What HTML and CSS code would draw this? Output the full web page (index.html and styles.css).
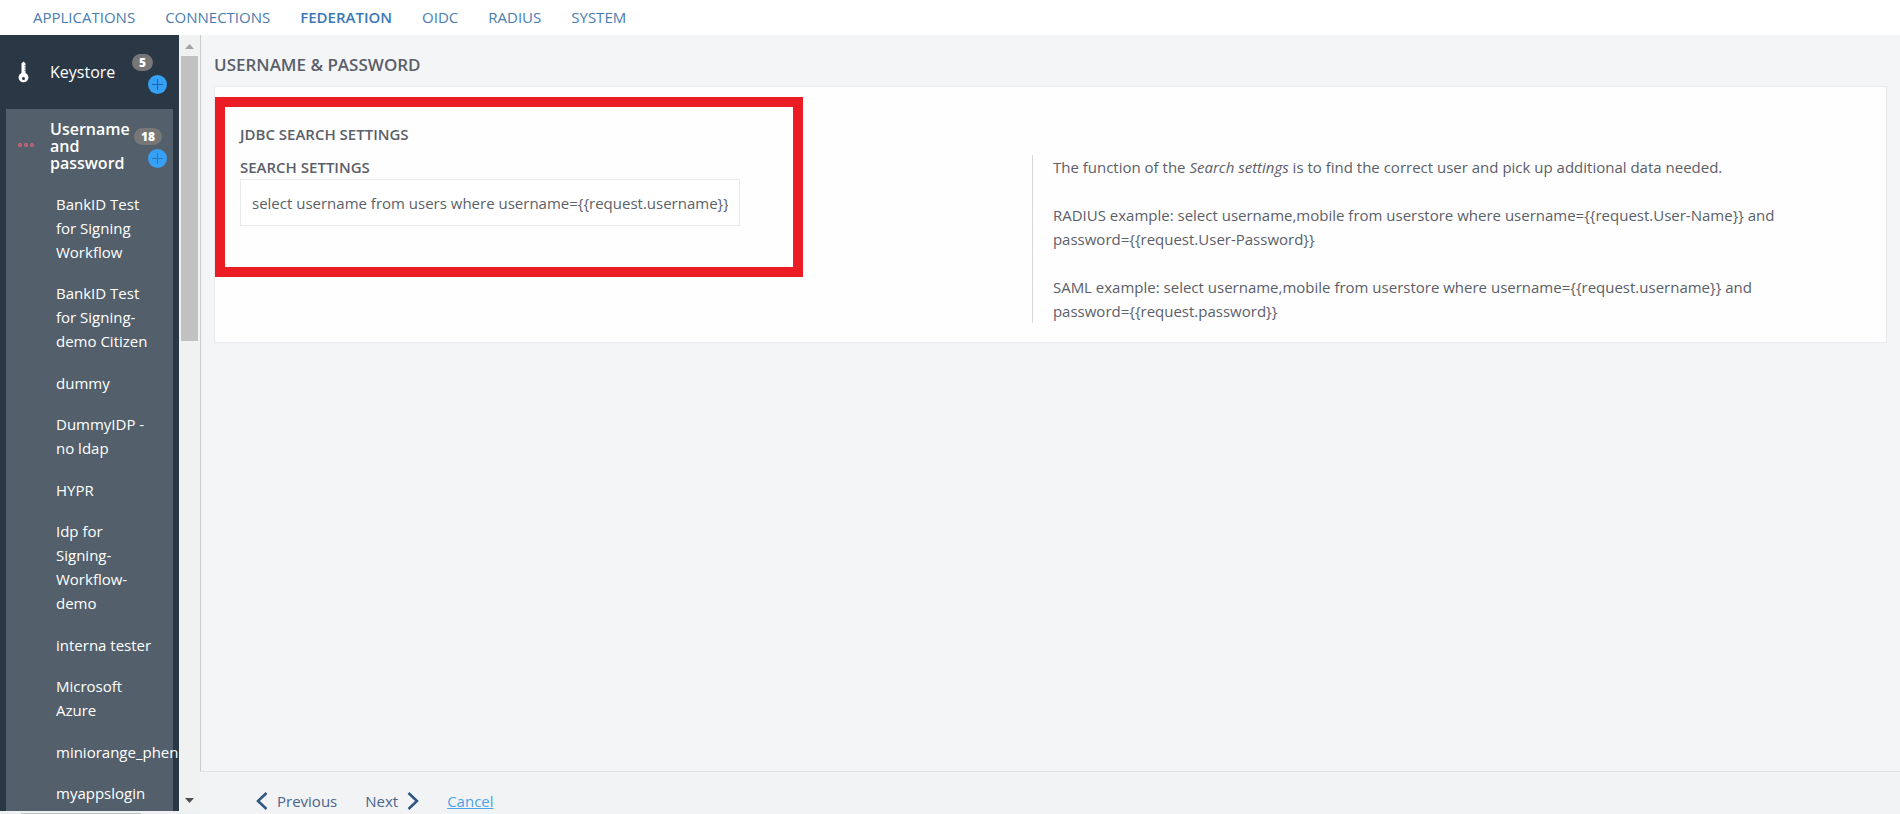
FILE: index.html
```html
<!doctype html>
<html lang="en">
<head>
  <meta charset="utf-8">
  <title>Username &amp; password</title>
  <link rel="stylesheet" href="styles.css">
</head>
<body>
  <nav class="topnav">
    <a href="#">APPLICATIONS</a>
    <a href="#">CONNECTIONS</a>
    <a href="#" class="active">FEDERATION</a>
    <a href="#">OIDC</a>
    <a href="#">RADIUS</a>
    <a href="#">SYSTEM</a>
  </nav>

  <div class="layout">
    <div class="side">
      <aside class="sidebar">
        <div class="group">
          <svg class="group-icon" width="16" height="22" viewBox="0 0 16 22">
            <path d="M3.500 2.500L5.500 .5L7.500 2.500V12A4.900 4.900 0 1 1 3.500 12Z" fill="#fff"/>
            <path d="M7.500 4.500h-1M7.500 7h-1M7.500 9.500h-1" stroke="#2a3845" stroke-width="1"/>
            <circle cx="5.500" cy="17.500" r="1.500" fill="#2a3845"/>
          </svg>
          <a href="#" class="group-name">Keystore</a>
          <span class="badge">5</span>
          <button class="add" aria-label="Add keystore">
            <svg width="19" height="19" viewBox="0 0 19 19"><path d="M9.500 4v11M4 9.500h11" stroke="#17649f"/></svg>
          </button>
        </div>
        <div class="group open">
          <svg class="group-icon" width="16" height="6" viewBox="0 0 16 6" fill="none" stroke="#e0637c" stroke-width="1.200">
            <circle cx="2" cy="2" r="1.300"/>
            <circle cx="8" cy="2" r="1.300"/>
            <circle cx="14" cy="2" r="1.300"/>
          </svg>
          <a href="#" class="group-name">Username and password</a>
          <span class="badge">18</span>
          <button class="add" aria-label="Add username and password">
            <svg width="19" height="19" viewBox="0 0 19 19"><path d="M9.500 4v11M4 9.500h11" stroke="#2876b8"/></svg>
          </button>
        </div>
        <ul class="items">
          <li><a href="#">BankID Test for Signing Workflow</a></li>
          <li><a href="#">BankID Test for Signing-demo Citizen</a></li>
          <li><a href="#">dummy</a></li>
          <li><a href="#">DummyIDP - no ldap</a></li>
          <li><a href="#">HYPR</a></li>
          <li><a href="#">Idp for Signing-Workflow-demo</a></li>
          <li><a href="#">interna tester</a></li>
          <li><a href="#">Microsoft Azure</a></li>
          <li><a href="#">miniorange_phen</a></li>
          <li><a href="#">myappslogin</a></li>
        </ul>
      </aside>
      <div class="vscroll">
        <svg width="21" height="21" viewBox="0 0 21 21"><path d="M6 14l4.500-5 4.500 5z" fill="#a3a3a3"/></svg>
        <div class="vthumb"></div>
        <svg class="down" width="21" height="21" viewBox="0 0 21 21"><path d="M6 8l4.500 5 4.500-5z" fill="#505050"/></svg>
      </div>
      <div class="hscroll"><div class="hthumb"></div></div>
    </div>

    <div class="page">
      <main class="main">
        <h1>USERNAME &amp; PASSWORD</h1>
        <div class="card">
          <section class="settings">
            <h2>JDBC SEARCH SETTINGS</h2>
            <label for="search">SEARCH SETTINGS</label>
            <input id="search" type="text" value="select username from users where username={{request.username}}">
          </section>
          <div class="help">
            <p>The function of the <i>Search settings</i> is to find the correct user and pick up additional data needed.</p>
            <p>RADIUS example: select username,mobile from userstore where username={{request.User-Name}} and password={{request.User-Password}}</p>
            <p>SAML example: select username,mobile from userstore where username={{request.username}} and password={{request.password}}</p>
          </div>
        </div>
      </main>
      <footer class="wizard">
        <button>
          <svg width="12" height="18" viewBox="0 0 12 18"><path d="M10.500 1L2 9l8.500 8" fill="none" stroke="#2f5583" stroke-width="2.500"/></svg>
          Previous
        </button>
        <button>
          Next
          <svg width="12" height="18" viewBox="0 0 12 18"><path d="M1.500 1L10 9l-8.500 8" fill="none" stroke="#2f5583" stroke-width="2.500"/></svg>
        </button>
        <a href="#">Cancel</a>
      </footer>
    </div>
  </div>
</body>
</html>
```
FILE: styles.css
```css
* {
  box-sizing: border-box;
}
body {
  margin: 0;
  height: 100vh;
  display: flex;
  flex-direction: column;
  overflow: hidden;
  background-color: #f4f5f6;
  color: #5b5f69;
  font-family: "Open Sans", sans-serif;
  font-size: 15px;
  line-height: 24px;
}
h1, h2, p, ul {
  margin: 0;
  padding: 0;
}
a {
  text-decoration: none;
}
button {
  padding: 0;
  border: 0;
  background: none;
  font: inherit;
  cursor: pointer;
}
svg {
  display: block;
}

/* top navigation */
.topnav {
  display: flex;
  flex: none;
  gap: 30px;
  height: 35px;
  padding: 5px 33px;
  background-color: #fff;
}
.topnav a {
  color: #4a7db0;
}
.topnav .active {
  color: #3a78b5;
  font-weight: 600;
}

.layout {
  display: flex;
  flex: 1;
  min-height: 0;
}

/* sidebar */
.side {
  display: grid;
  grid-template-columns: 179px 21px;
  grid-template-rows: minmax(0, 1fr) 3px;
  flex: none;
}
.sidebar {
  padding: 0 6px;
  overflow: hidden;
  background-color: #2a3845;
}
.group {
  position: relative;
  display: flex;
  align-items: center;
  height: 74px;
  padding-left: 12px;
}
.group-icon {
  flex: none;
  margin-right: 16px;
}
.group-name {
  width: 84px;
  color: #fff;
  font-size: 16px;
  line-height: 17px;
}
.open {
  background-color: #535f6b;
}
.open .group-name {
  font-weight: 600;
}
.badge {
  position: absolute;
  top: 19px;
  right: 11px;
  padding: 0 7px;
  border-radius: 9px;
  background-color: #777;
  color: #fff;
  font-size: 12px;
  font-weight: 800;
  line-height: 17px;
}
.group:first-child .badge {
  right: 20px;
}
.add {
  position: absolute;
  top: 40px;
  right: 6px;
  width: 19px;
  height: 19px;
  border-radius: 50%;
  background-color: #35a0f4;
}
.items {
  padding: 9px 20px 9px 50px;
  background-color: #535f6b;
  list-style: none;
}
.items li {
  margin-bottom: 17px;
}
.items li:nth-child(even) {
  margin-bottom: 18px;
}
.items a {
  color: #fff;
}
.vscroll {
  display: flex;
  flex-direction: column;
  background-color: #f0f1f1;
}
.vthumb {
  height: 285px;
  margin: 0 2px;
  background-color: #c1c1c1;
}
.down {
  margin-top: auto;
}
.hscroll {
  grid-column: 1 / 3;
  padding: 2px 59px 0 21px;
  background-color: #eef1f4;
}
.hthumb {
  height: 1px;
  background-color: #c1c1c1;
}

/* page */
.page {
  display: flex;
  flex: 1;
  flex-direction: column;
  min-width: 0;
}
.main {
  flex: 1;
  padding: 18px 13px 0;
  border-left: 1px solid #c8cacc;
}
h1 {
  font-size: 17px;
  font-weight: 600;
}
.card {
  display: grid;
  grid-template-columns: 22fr 23fr;
  align-items: start;
  margin-top: 9px;
  padding-bottom: 19px;
  border: 1px solid #e9eaed;
  background-color: #fefefe;
}
.settings {
  width: 72%;
  height: 180px;
  margin-top: 10px;
  padding: 15px;
  border: 10px solid #ec1c24;
}
h2, label {
  display: block;
  font-size: 15px;
  font-weight: 600;
  line-height: 24px;
}
h2 {
  margin-bottom: 9px;
}
.settings input {
  width: 500px;
  max-width: 100%;
  height: 47px;
  padding: 0 11px;
  border: 1px solid #e8eaed;
  background-color: #fff;
  color: #5b5f69;
  font: inherit;
}
.help {
  margin-top: 68px;
  padding: 0 80px 0 20px;
  border-left: 1px solid #d5d7da;
}
.help p + p {
  margin-top: 24px;
}

/* previous / next */
.wizard {
  display: flex;
  align-items: center;
  gap: 28px;
  height: 43px;
  padding: 16px 56px 0;
  border-top: 1px solid #dfe1e3;
  background-color: #f2f3f4;
}
.wizard button {
  display: flex;
  align-items: center;
  gap: 9px;
  color: #47668c;
}
.wizard a {
  color: #4da3e8;
  text-decoration: underline;
}
```
